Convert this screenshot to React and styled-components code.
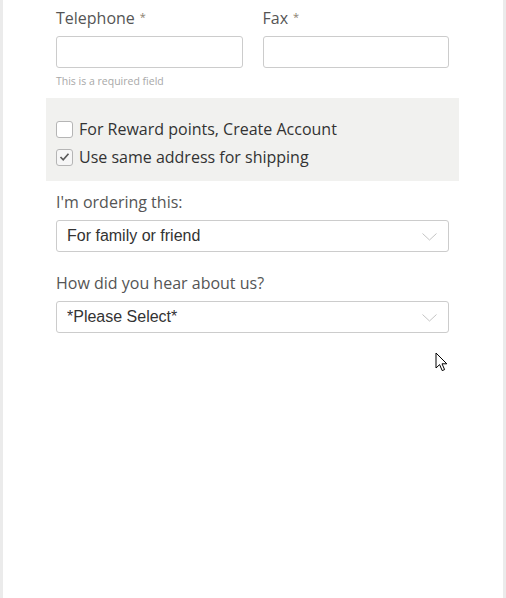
import React from "react";
import styled, { createGlobalStyle } from "styled-components";

const Global = createGlobalStyle`
  html, body { margin: 0; padding: 0; background: #ebebeb; }
  body { font-family: "Open Sans", "Liberation Sans", sans-serif; }
  * { box-sizing: border-box; }
`;

const Page = styled.div`
  position: relative;
  margin: 0 3px;
  min-height: 598px;
  background: #ffffff;
  padding: 6px 54px 0 53px;
`;

const Row = styled.div`
  display: grid;
  grid-template-columns: 1fr 1fr;
  column-gap: 20px;
`;

const Field = styled.div`
  display: flex;
  flex-direction: column;
`;

const Label = styled.label`
  display: block;
  font-family: "Open Sans", sans-serif;
  font-size: 16px;
  line-height: 22px;
  color: #555555;
  margin-top: ${(p) => p.$top || 0}px;
  margin-bottom: 7px;
`;

const Star = styled.span`
  font-size: 11px;
  color: #8a8070;
  margin-left: 5px;
  vertical-align: 3px;
`;

const TextInput = styled.input`
  height: 32px;
  width: 100%;
  border: 1px solid #cccccc;
  border-radius: 3px;
  background: #fff;
  outline: none;
`;

const Hint = styled.div`
  margin-top: 5px;
  font-size: 10.5px;
  line-height: 16px;
  color: #a8a8a8;
`;

const Panel = styled.div`
  margin: 9px -10px 0;
  background: #f1f1ef;
  padding: 17px 10px 10px;
`;

const CheckRow = styled.label`
  display: flex;
  align-items: center;
  height: 28px;
  font-size: 16px;
  color: #333333;
  cursor: pointer;
`;

const Box = styled.span`
  width: 17px;
  height: 17px;
  border: 1px solid #b5b5b5;
  border-radius: 3px;
  background: ${(p) => (p.$checked ? "#f6f6f6" : "#ffffff")};
  margin-right: 6px;
  display: flex;
  align-items: center;
  justify-content: center;
  flex: none;
`;

const SelectWrap = styled.div`
  position: relative;
  height: 32px;
`;

const Select = styled.select`
  appearance: none;
  -webkit-appearance: none;
  width: 100%;
  height: 32px;
  border: 1px solid #cccccc;
  border-radius: 3px;
  background: #fff;
  padding: 0 30px 2px 10px;
  font-family: "Liberation Sans", Arial, sans-serif;
  font-size: 16px;
  color: #333333;
  outline: none;
`;

const Chevron = styled.svg`
  position: absolute;
  right: 12px;
  top: 13px;
  pointer-events: none;
`;

const Cursor = styled.svg`
  position: absolute;
  left: 432px;
  top: 352px;
`;

const Check = () => (
  <svg width="11" height="10" viewBox="0 0 11 10">
    <path d="M1.5 5 L4.2 7.8 L9.5 1.8" fill="none" stroke="#5a5a5a" strokeWidth="1.7" />
  </svg>
);

const Down = () => (
  <Chevron width="15" height="8" viewBox="0 0 15 8">
    <path d="M0.5 0.5 L7.5 7 L14.5 0.5" fill="none" stroke="#c4c4c4" strokeWidth="1" />
  </Chevron>
);

export default function App() {
  return (
    <>
      <Global />
      <Page>
        <Row>
          <Field>
            <Label>
              Telephone<Star>*</Star>
            </Label>
            <TextInput type="text" />
            <Hint>This is a required field</Hint>
          </Field>
          <Field>
            <Label>
              Fax<Star>*</Star>
            </Label>
            <TextInput type="text" />
          </Field>
        </Row>
        <Panel>
          <CheckRow>
            <Box />
            For Reward points, Create Account
          </CheckRow>
          <CheckRow>
            <Box $checked>
              <Check />
            </Box>
            Use same address for shipping
          </CheckRow>
        </Panel>
        <Label $top={10}>I'm ordering this:</Label>
        <SelectWrap>
          <Select defaultValue="family">
            <option value="family">For family or friend</option>
            <option value="me">For myself</option>
          </Select>
          <Down />
        </SelectWrap>
        <Label $top={20}>How did you hear about us?</Label>
        <SelectWrap>
          <Select defaultValue="">
            <option value="">*Please Select*</option>
          </Select>
          <Down />
        </SelectWrap>
        <Cursor width="13" height="20" viewBox="0 0 13 20">
          <path
            d="M1 1 L1 16 L4.6 12.6 L7.2 18.6 L9.6 17.6 L7 11.8 L11.8 11.8 Z"
            fill="#ffffff"
            stroke="#000000"
            strokeWidth="1"
            strokeLinejoin="round"
          />
        </Cursor>
      </Page>
    </>
  );
}
